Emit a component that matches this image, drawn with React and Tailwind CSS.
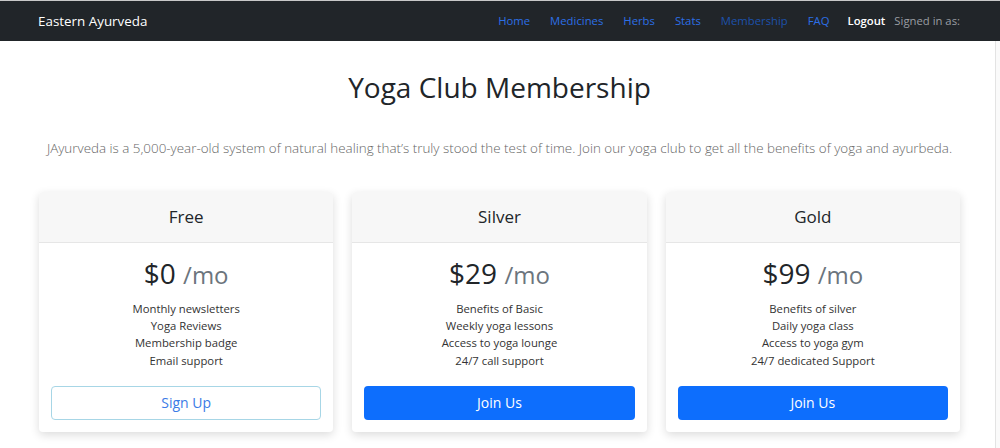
import React from 'react';

const navLinks = [
  { label: 'Home', active: false },
  { label: 'Medicines', active: false },
  { label: 'Herbs', active: false },
  { label: 'Stats', active: false },
  { label: 'Membership', active: true },
  { label: 'FAQ', active: false },
];

const plans = [
  {
    name: 'Free',
    price: '$0',
    features: ['Monthly newsletters', 'Yoga Reviews', 'Membership badge', 'Email support'],
    cta: 'Sign Up',
    outline: true,
  },
  {
    name: 'Silver',
    price: '$29',
    features: ['Benefits of Basic', 'Weekly yoga lessons', 'Access to yoga lounge', '24/7 call support'],
    cta: 'Join Us',
    outline: false,
  },
  {
    name: 'Gold',
    price: '$99',
    features: ['Benefits of silver', 'Daily yoga class', 'Access to yoga gym', '24/7 dedicated Support'],
    cta: 'Join Us',
    outline: false,
  },
];

const PlanCard = ({ plan }) => (
  <div className="flex flex-col rounded-[4px] bg-white shadow-[0_3px_10px_rgba(0,0,0,0.14)]">
    <div className="flex h-[51px] items-center justify-center rounded-t-[4px] border-b border-[#e6e6e6] bg-[#f7f7f7]">
      <h4 className="text-[17px] text-[#212529]">{plan.name}</h4>
    </div>
    <div className="flex flex-col items-center px-[12px] pt-[13px] pb-[12px]">
      <h1 className="text-[28px] font-medium leading-[34px] text-[#212529]">
        {plan.price} <small className="text-[24px] text-[#6c757d]">/mo</small>
      </h1>
      <ul className="mt-[8px] mb-[17px] text-center text-[11.3px] leading-[17.2px] text-[#333]">
        {plan.features.map((f) => (
          <li key={f}>{f}</li>
        ))}
      </ul>
      {plan.outline ? (
        <button className="h-[34px] w-full rounded-[4px] border border-[#a7d6e6] bg-white text-[14px] text-[#3b7be6]">
          {plan.cta}
        </button>
      ) : (
        <button className="h-[34px] w-full rounded-[4px] bg-[#0d6efd] text-[14px] text-white">
          {plan.cta}
        </button>
      )}
    </div>
  </div>
);

export default function App() {
  return (
    <div className="min-h-[448px] bg-white font-['Open_Sans',sans-serif]">
      <nav className="flex h-[41px] items-center border-t border-[#c8c8c8] bg-[#212529] pl-[38px] pr-[40px]">
        <span className="text-[13.4px] text-white">Eastern Ayurveda</span>
        <div className="ml-auto flex items-center text-[11.3px]">
          <div className="flex items-center gap-[20px]">
            {navLinks.map((l) => (
              <a key={l.label} className={l.active ? 'text-[#1c51ab]' : 'text-[#2c6fe6]'}>
                {l.label}
              </a>
            ))}
          </div>
          <a className="ml-[18px] font-semibold text-white">Logout</a>
          <span className="ml-[9px] text-[#9a9ea3]">Signed in as:</span>
        </div>
      </nav>
      <div className="flex">
        <main className="w-[995px]">
          <div className="ml-[39px] w-[921px]">
            <h1 className="mt-[28px] text-center text-[28px] font-medium leading-[36px] text-[#212529]">
              Yoga Club Membership
            </h1>
            <p className="mt-[32px] text-center text-[13.4px] font-light leading-[22px] text-[#666]">
              JAyurveda is a 5,000-year-old system of natural healing that’s truly stood the test of time. Join our yoga club to get all the benefits of yoga and ayurbeda.
            </p>
            <div className="mt-[33px] grid grid-cols-3 gap-[19px]">
              {plans.map((p) => (
                <PlanCard key={p.name} plan={p} />
              ))}
            </div>
          </div>
        </main>
        <div className="h-[407px] w-[5px] border-l border-[#e3e3e3] bg-[#fafafa]" />
      </div>
    </div>
  );
}
